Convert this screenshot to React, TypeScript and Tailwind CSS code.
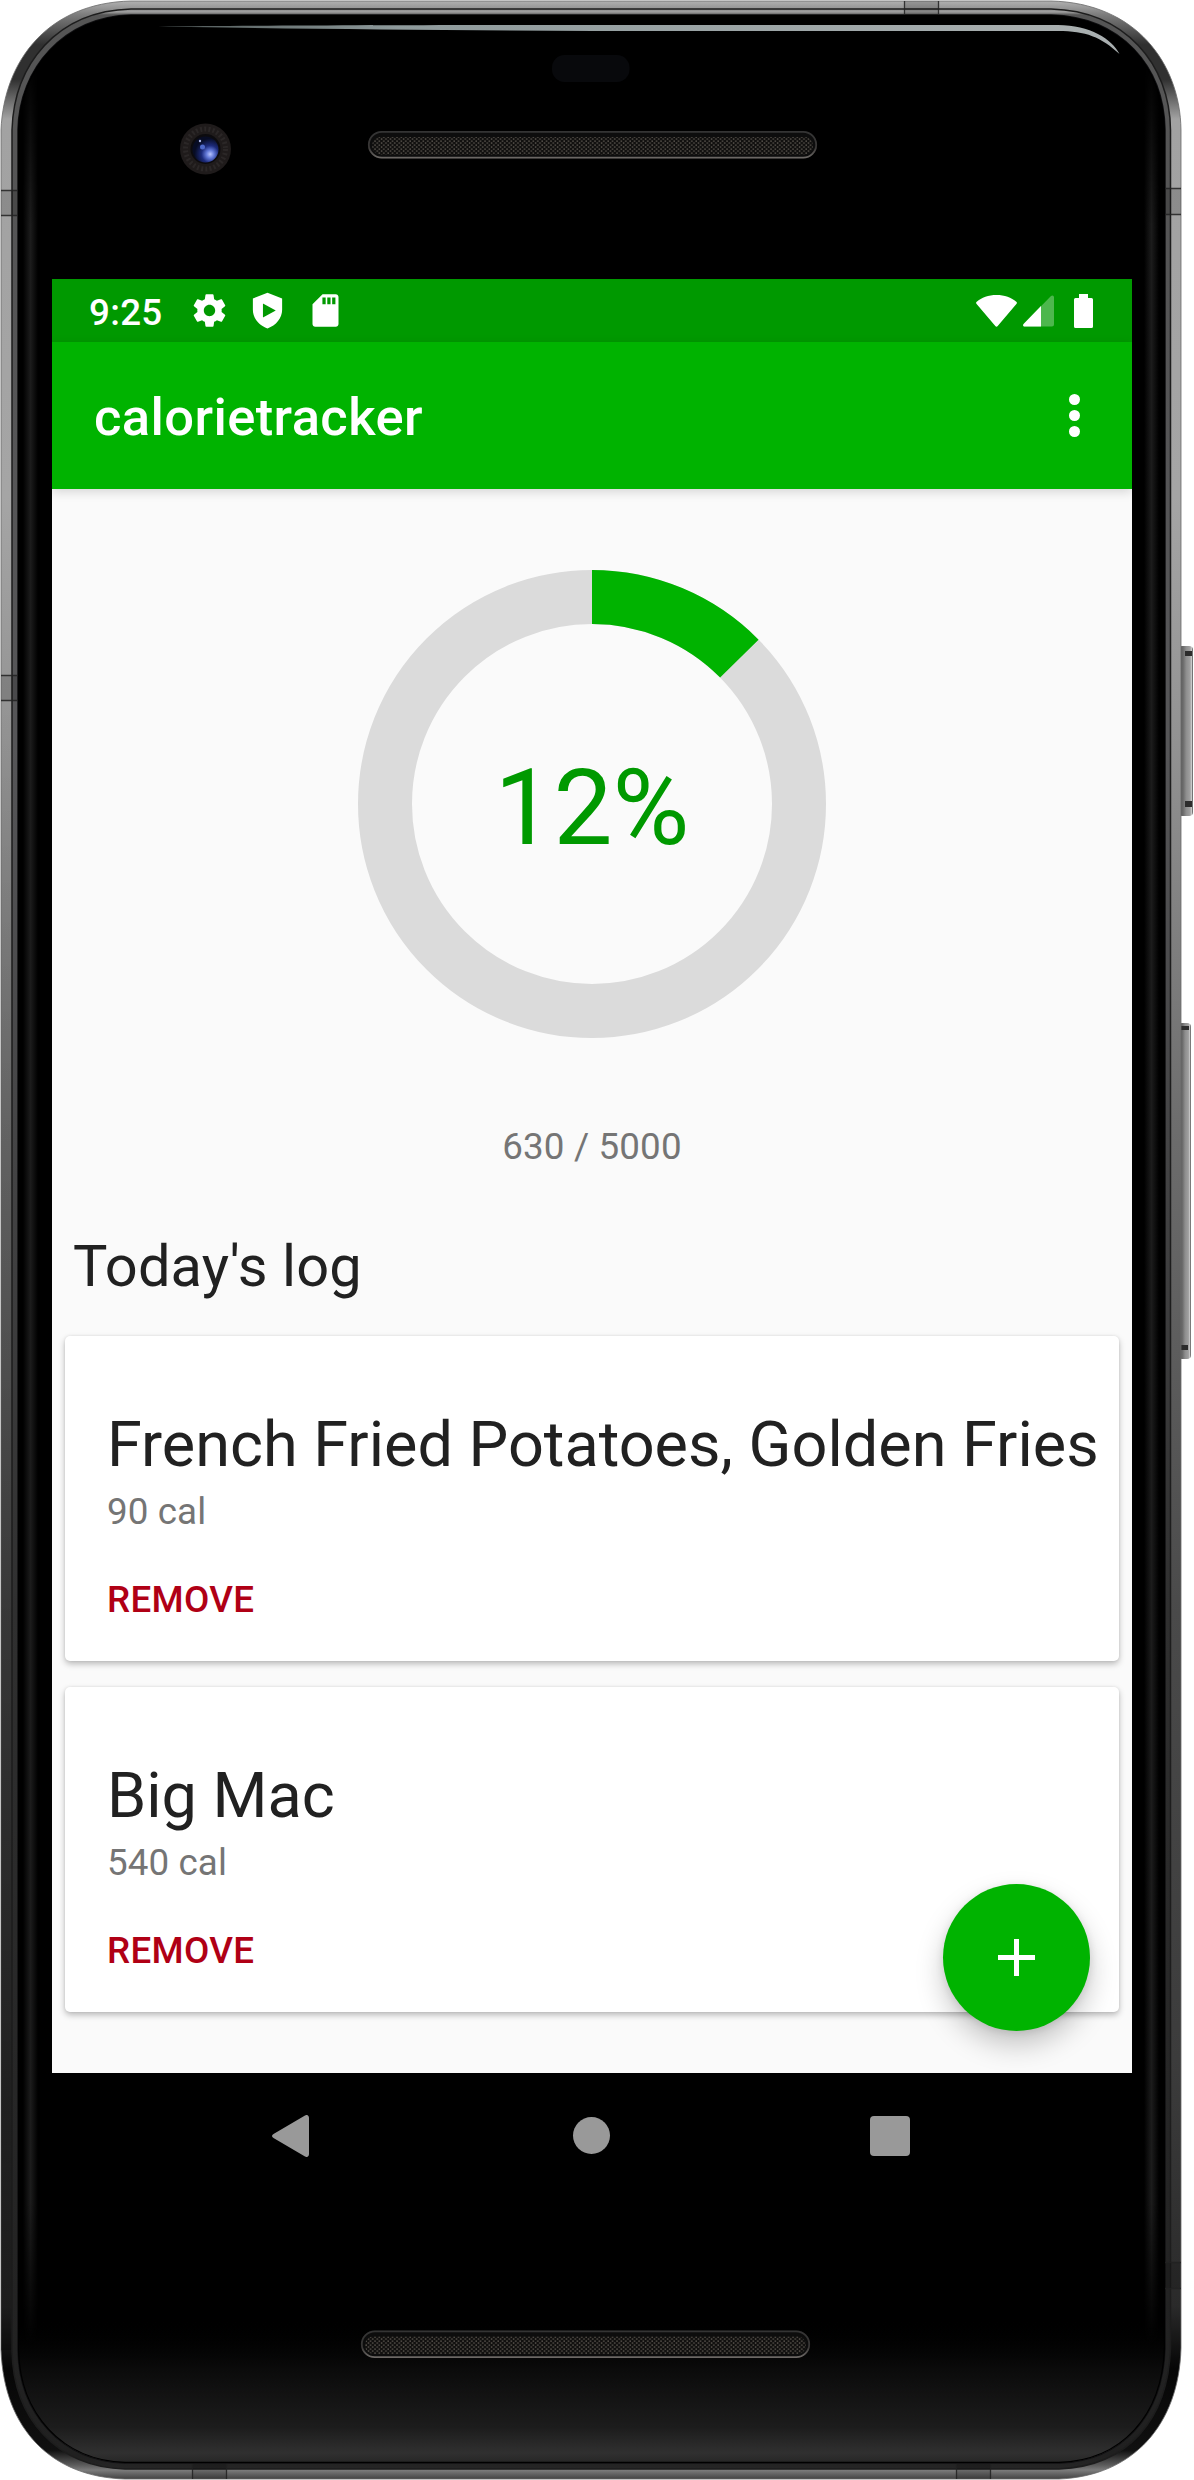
const BODY =
  'M131 1H1051C1135 3 1180 62 1181 130V2348C1179 2425 1133 2476 1059 2479H125C52 2477 4 2430 1 2350V130C4 60 48 3 131 1Z';
const RIM =
  'M131 9H1051C1125 11 1170 64 1170.500 130V2348C1168 2420 1128 2466 1059 2469H125C58 2467 13 2420 12 2350V130C14 64 57 11 131 9Z';
const GLASS =
  'M131 15H1051C1121 17 1164 66 1165 130V2348C1163 2416 1122 2461 1059 2463H125C62 2461 19 2414 18 2350V130C19 68 64 17 131 15Z';

function Speaker({ x, y }: { x: number; y: number }) {
  return (
    <g>
      <rect x={x} y={y} width="449" height="27.500" rx="13.500" fill="#0d0d0d" />
      <rect x={x + 0.8} y={y + 0.8} width="447.400" height="25.900" rx="13" fill="none" stroke="url(#slot)" strokeWidth="1.800" />
      <rect x={x + 4} y={y + 6} width="441" height="17.500" rx="8.500" fill="url(#mesh)" />
    </g>
  );
}

function DeviceFrame() {
  return (
    <svg className="absolute inset-0" width="1194" height="2480" viewBox="0 0 1194 2480" aria-hidden="true">
      <defs>
        <linearGradient id="metal" gradientUnits="userSpaceOnUse" x1="0" y1="0" x2="0" y2="2480">
          <stop offset="0" stopColor="#b4b4b4" />
          <stop offset="0.006" stopColor="#7c7c7c" />
          <stop offset="0.018" stopColor="#303030" />
          <stop offset="0.032" stopColor="#303030" />
          <stop offset="0.048" stopColor="#a2a2a2" />
          <stop offset="0.2" stopColor="#a5a5a5" />
          <stop offset="0.3" stopColor="#929292" />
          <stop offset="0.45" stopColor="#6e6e6e" />
          <stop offset="0.65" stopColor="#4a4a4a" />
          <stop offset="0.83" stopColor="#3c3c3c" />
          <stop offset="0.93" stopColor="#2a2a2a" />
          <stop offset="0.955" stopColor="#060606" />
          <stop offset="0.988" stopColor="#101010" />
          <stop offset="0.994" stopColor="#5c5c5c" />
          <stop offset="0.996" stopColor="#7c7c7c" />
          <stop offset="1" stopColor="#3c3c3c" />
        </linearGradient>
        <linearGradient id="leftShade" gradientUnits="userSpaceOnUse" x1="0" y1="700" x2="0" y2="2350">
          <stop offset="0" stopColor="#000000" stopOpacity="0" />
          <stop offset="0.4" stopColor="#000000" stopOpacity="0.150" />
          <stop offset="0.85" stopColor="#000000" stopOpacity="0.450" />
          <stop offset="1" stopColor="#000000" stopOpacity="0.300" />
        </linearGradient>
        <linearGradient id="rim" gradientUnits="userSpaceOnUse" x1="0" y1="0" x2="0" y2="2480">
          <stop offset="0" stopColor="#4a4a4a" />
          <stop offset="0.0048" stopColor="#a0a0a0" />
          <stop offset="0.006" stopColor="#555555" />
          <stop offset="0.3" stopColor="#565658" />
          <stop offset="0.65" stopColor="#303030" />
          <stop offset="0.99" stopColor="#202020" />
          <stop offset="1" stopColor="#2b2b2b" />
        </linearGradient>
        <linearGradient id="chin" x1="0" y1="0" x2="0" y2="1">
          <stop offset="0" stopColor="#000000" stopOpacity="0" />
          <stop offset="0.35" stopColor="#0b0b0b" />
          <stop offset="0.75" stopColor="#1c1c1c" />
          <stop offset="0.93" stopColor="#303030" />
          <stop offset="1" stopColor="#262626" />
        </linearGradient>
        <linearGradient id="sheen" x1="0" y1="0" x2="1" y2="0">
          <stop offset="0" stopColor="#1c1c1c" stopOpacity="0" />
          <stop offset="0.5" stopColor="#1c1c1c" />
          <stop offset="1" stopColor="#1c1c1c" stopOpacity="0" />
        </linearGradient>
        <linearGradient id="sheenFade" gradientUnits="userSpaceOnUse" x1="0" y1="60" x2="0" y2="2440">
          <stop offset="0" stopColor="#000000" />
          <stop offset="0.07" stopColor="#ffffff" />
          <stop offset="0.9" stopColor="#ffffff" />
          <stop offset="0.96" stopColor="#000000" />
        </linearGradient>
        <mask id="sheenMask" maskUnits="userSpaceOnUse" x="0" y="0" width="1194" height="2480">
          <rect width="1194" height="2480" fill="url(#sheenFade)" />
        </mask>
        <linearGradient id="shine" x1="0" y1="0" x2="1" y2="0">
          <stop offset="0" stopColor="#4d5656" />
          <stop offset="0.25" stopColor="#8e9a9c" />
          <stop offset="1" stopColor="#aab0b1" />
        </linearGradient>
        <linearGradient id="slot" x1="0" y1="0" x2="0" y2="1">
          <stop offset="0" stopColor="#343434" />
          <stop offset="0.6" stopColor="#383635" />
          <stop offset="1" stopColor="#6c6865" />
        </linearGradient>
        <linearGradient id="key" x1="0" y1="0" x2="1" y2="0">
          <stop offset="0" stopColor="#4d4d4d" />
          <stop offset="0.35" stopColor="#6c6c6c" />
          <stop offset="0.55" stopColor="#8e8e8e" />
          <stop offset="0.8" stopColor="#a0a0a0" />
          <stop offset="0.9" stopColor="#c8c8c8" />
          <stop offset="1" stopColor="#4a4a4a" />
        </linearGradient>
        <radialGradient id="lens" cx="0.68" cy="0.68" r="0.6">
          <stop offset="0" stopColor="#b8c4ff" />
          <stop offset="0.25" stopColor="#6379d8" />
          <stop offset="0.55" stopColor="#1d2b7c" />
          <stop offset="1" stopColor="#070c24" />
        </radialGradient>
        <pattern id="mesh" width="4.400" height="4" patternUnits="userSpaceOnUse">
          <rect width="4.400" height="4" fill="#11100f" />
          <rect x="0.300" y="0.300" width="1.400" height="1.700" fill="#514d47" />
          <rect x="2.500" y="2.200" width="1.400" height="1.700" fill="#514d47" />
        </pattern>
        <clipPath id="glassClip">
          <path d={GLASS} />
        </clipPath>
        <clipPath id="bodyClip">
          <path d={BODY} />
        </clipPath>
      </defs>

      {/* side keys */}
      <rect x="1178" y="646" width="15" height="170" rx="4" fill="url(#key)" />
      <path d="M1185 651h7v5h-7zM1185 801h7v6h-7z" fill="#2c2c2c" />
      <rect x="1178" y="1023" width="13" height="336" rx="4" fill="url(#key)" />
      <path d="M1181 1026h8v4h-8zM1181 1345h7v5h-7z" fill="#2c2c2c" />

      {/* metal body and glass */}
      <path d={BODY} fill="url(#metal)" stroke="#6a6a6a" strokeWidth="0.800" />
      <rect x="1" y="700" width="14" height="1650" fill="url(#leftShade)" />
      <path d={RIM} fill="url(#rim)" stroke="#1d1d1d" strokeWidth="1.500" />
      <path d={GLASS} fill="#000000" stroke="#101012" strokeWidth="1.500" />
      <g clipPath="url(#glassClip)">
        <g mask="url(#sheenMask)">
          <rect x="23" y="60" width="15" height="2380" fill="url(#sheen)" />
          <rect x="1144" y="60" width="15" height="2380" fill="url(#sheen)" />
        </g>
        <rect x="18" y="2320" width="1148" height="143" fill="url(#chin)" />
        <path d={GLASS} fill="none" stroke="#000000" strokeWidth="2.500" />
      </g>

      {/* antenna bands */}
      <g clipPath="url(#bodyClip)" fill="#000000" fillOpacity="0.140">
        <path d="M904 0h35v15h-35zM0 190h17v26H0zM1165 188h17v27h-17zM0 675h18v26H0zM1165 2262h17v27h-17zM192 2464h35v16h-35zM956 2464h35v16h-35z" />
        <path
          d="M904.500 1v14M938.500 1v14M1 190.500h16M1 215.500h16M1165 188.500h16M1165 214.500h16M1 675.500h17M1 700.500h17M1165 2262.500h16M1165 2288.500h16M192.500 2464v15M226.500 2464v15M956.500 2464v15M990.500 2464v15"
          stroke="#222222"
          strokeOpacity="0.850"
          strokeWidth="1.300"
        />
      </g>

      <path d="M158 26.500C260 25.500 420 25 594 25H1058C1090 25 1112 39 1119.500 54C1101 37 1086 31 1058 31H594C440 30 300 29 158 26.500Z" fill="url(#shine)" />
      <rect x="552" y="55" width="77.500" height="27" rx="12.500" fill="#08090c" />

      {/* front camera */}
      <circle cx="205.500" cy="149" r="25.500" fill="#1f1b1b" />
      <circle cx="205.500" cy="149" r="20" fill="none" stroke="#2b2727" strokeWidth="5" strokeDasharray="2 2.200" />
      <circle cx="205.500" cy="149" r="15" fill="#0c0b0e" />
      <circle cx="205.500" cy="149.500" r="13" fill="url(#lens)" />
      <circle cx="202.500" cy="147" r="2.500" fill="#4e68c8" />
      <circle cx="200" cy="141" r="1.200" fill="#a9b4e6" />

      <Speaker x={368} y={131} />
      <Speaker x={361} y={2330.5} />
    </svg>
  );
}

function StatusBar() {
  return (
    <div className="flex h-[63px] items-center bg-[#009900] pl-[37px] pr-[39px] text-white">
      <span className="w-[101px] pt-[3px] text-[36.75px] leading-[63px] font-medium tracking-[0.3px]">9:25</span>
      <svg className="h-[39px] w-[39px]" viewBox="0 0 24 24" fill="currentColor">
        <path d="M19.430 12.980c.040-.320.070-.640.070-.980s-.030-.660-.070-.980l2.110-1.650c.190-.150.240-.420.120-.640l-2-3.460c-.120-.220-.390-.300-.610-.220l-2.490 1c-.520-.400-1.080-.730-1.690-.980l-.380-2.650C14.460 2.180 14.250 2 14 2h-4c-.250 0-.460.180-.490.420l-.380 2.650c-.610.250-1.170.590-1.690.980l-2.490-1c-.230-.090-.490 0-.610.220l-2 3.460c-.130.220-.070.490.120.640l2.110 1.650c-.040.320-.070.650-.070.980s.030.660.070.980l-2.110 1.650c-.190.150-.240.420-.120.640l2 3.460c.120.220.390.300.610.220l2.490-1c.520.400 1.080.730 1.690.980l.380 2.650c.030.240.240.420.490.420h4c.250 0 .460-.180.490-.420l.380-2.650c.610-.250 1.170-.590 1.690-.980l2.490 1c.230.090.490 0 .610-.220l2-3.460c.120-.220.070-.490-.120-.640l-2.110-1.650zM12 15.500c-1.930 0-3.500-1.570-3.500-3.500s1.570-3.500 3.500-3.500 3.500 1.570 3.500 3.500-1.570 3.500-3.500 3.500z" />
      </svg>
      <svg className="ml-[19px] h-[39px] w-[39px]" viewBox="0 0 24 24" fill="currentColor" fillRule="evenodd">
        <path d="M12 1 3 4.600V11.500c0 5.200 3.700 9.600 9 11.500 5.300-1.900 9-6.300 9-11.500V4.600L12 1zM9.200 7.700v8.600L17.100 12 9.200 7.700z" />
      </svg>
      <svg className="ml-[18.5px] h-[39px] w-[39px]" viewBox="0 0 24 24" fill="currentColor">
        <path d="M18.300 2h-8.100L4 8.200V20.300c0 .950.750 1.700 1.700 1.700h12.600c.950 0 1.700-.750 1.700-1.700V3.700c0-.950-.750-1.700-1.700-1.700zM12.100 8.200h-2v-4.200h2v4.200zm3 0h-2v-4.200h2v4.200zm3 0h-2v-4.200h2v4.200z" />
      </svg>
      <svg className="ml-auto h-8 w-[41px]" viewBox="0 0 41 32" fill="currentColor">
        <path d="M20.500 0C12.500 0 5.500 2.700.7 6.700c-.7.600-.8 1.300-.3 2L19.300 31c.7.900 1.700.9 2.400 0L40.600 8.700c.5-.7.400-1.400-.3-2C35.500 2.700 28.500 0 20.500 0z" />
      </svg>
      <svg className="ml-1.5 h-8 w-8" viewBox="0 0 32 32" fill="currentColor">
        <path d="M31 2.500v27a2 2 0 0 1-2 2H2c-2 0-2.500-1.500-1.200-2.800L28 1c1.400-1.200 3-.5 3 1.500z" opacity="0.300" />
        <path d="M18 11v20.500H2c-2 0-2.500-1.500-1.200-2.800z" />
      </svg>
      <svg className="ml-[19px] h-[34px] w-[19px]" viewBox="0 0 19 34" fill="currentColor">
        <path d="M5 0h9v4h3.500A1.500 1.500 0 0 1 19 5.500v27a1.500 1.500 0 0 1-1.500 1.500h-16A1.500 1.500 0 0 1 0 32.500v-27A1.500 1.500 0 0 1 1.500 4H5z" />
      </svg>
    </div>
  );
}

function AppBar() {
  return (
    <header className="relative flex h-[147px] items-center justify-between bg-[#00b300] pl-[42px] pr-[52px] text-white shadow-[0_3px_10px_rgba(0,0,0,0.150)]">
      <h1 className="pt-[3px] text-[52.5px] leading-[62px] font-medium tracking-[0.4px]">calorietracker</h1>
      <button className="flex flex-col gap-[5px]" aria-label="More options">
        <span className="size-[11px] rounded-full bg-white" />
        <span className="size-[11px] rounded-full bg-white" />
        <span className="size-[11px] rounded-full bg-white" />
      </button>
    </header>
  );
}

function ProgressRing({ eaten, goal }: { eaten: number; goal: number }) {
  const length = 2 * Math.PI * 207;
  return (
    <div className="grid size-[468px] place-items-center">
      <svg className="col-start-1 row-start-1 size-[468px] -rotate-90" viewBox="0 0 468 468" fill="none" strokeWidth="54">
        <circle cx="234" cy="234" r="207" stroke="#dbdbdb" />
        <circle cx="234" cy="234" r="207" stroke="#00b300" strokeDasharray={`${(eaten / goal) * length} ${length}`} />
      </svg>
      <span className="col-start-1 row-start-1 pt-[9px] text-[105px] leading-none text-[#009900]">{Math.floor((eaten / goal) * 100)}%</span>
    </div>
  );
}

function LogCard({ name, calories }: { name: string; calories: number }) {
  return (
    <article className="flex h-[325px] flex-col items-start rounded-[5px] bg-white px-[42px] pt-[72px] shadow-[0_3px_6px_rgba(0,0,0,0.260),0_0_3px_rgba(0,0,0,0.080)]">
      <h3 className="text-[63px] leading-[74px] whitespace-nowrap text-[#212121]">{name}</h3>
      <p className="mt-2 text-[36.75px] leading-[43px] tracking-[0.1px] text-[#757575]">{calories} cal</p>
      <button className="mt-[45px] text-[36.75px] leading-[43px] font-medium tracking-[0.3px] text-[#b00015]">REMOVE</button>
    </article>
  );
}

const LOG = [
  { name: 'French Fried Potatoes, Golden Fries', calories: 90 },
  { name: 'Big Mac', calories: 540 },
];

export default function App() {
  return (
    <div className="relative h-[2480px] w-[1194px] overflow-hidden bg-white pt-[279px] pl-[52px] font-['Roboto',sans-serif]">
      <DeviceFrame />
      <div className="relative w-[1080px]">
        <StatusBar />
        <AppBar />
        <main className="flex h-[1584px] flex-col bg-[#fafafa] pt-[81px]">
          <div className="flex flex-col items-center">
            <ProgressRing eaten={630} goal={5000} />
            <p className="mt-[87px] text-[36.75px] leading-[43px] tracking-[0.15px] text-[#757575]">630 / 5000</p>
          </div>
          <h2 className="mt-[64px] ml-[21px] text-[57.75px] leading-[68px] tracking-[0.15px] text-[#212121]">Today's log</h2>
          <div className="mt-[36px] flex flex-col gap-[26px] px-[13px]">
            {LOG.map((entry) => (
              <LogCard key={entry.name} name={entry.name} calories={entry.calories} />
            ))}
          </div>
        </main>
        <button
          className="absolute top-[1605px] right-[42px] flex size-[147px] items-center justify-center rounded-full bg-[#00b300] shadow-[0_14px_28px_rgba(0,0,0,0.220),0_2px_8px_rgba(0,0,0,0.100)]"
          aria-label="Add food"
        >
          <svg className="size-[37px]" viewBox="0 0 37 37" fill="#ffffff">
            <path d="M16 0h5v16h16v5H21v16h-5V21H0v-5h16z" />
          </svg>
        </button>
        <nav className="flex h-[125px] items-center bg-black pl-[220px]">
          <svg className="h-[42px] w-[37px]" viewBox="0 0 37 42" fill="#999999">
            <path d="M37 3v36c0 2.500-2 3.800-4 2.500L1.500 23c-2-1.200-2-2.800 0-4L33 .5C35-.8 37 .5 37 3z" />
          </svg>
          <span className="ml-[264px] size-[37px] rounded-full bg-[#999999]" />
          <span className="ml-[260px] size-10 rounded bg-[#999999]" />
        </nav>
      </div>
    </div>
  );
}
